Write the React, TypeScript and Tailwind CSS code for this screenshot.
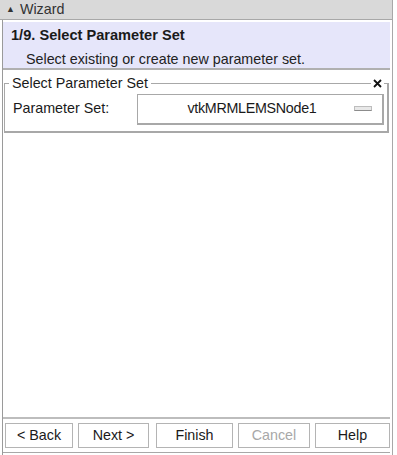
export default function App() {
  const btn = "h-[25px] border border-[#b4b4b4] bg-white flex items-center justify-center text-[14.3px]";
  return (
    <div className="w-[397px] h-[455px] bg-white flex font-['Liberation_Sans',Arial,sans-serif] text-[#1a1a1a]">
      <div className="w-[393px] h-full flex flex-col border-r border-[#a8a8a8]">
        {/* title bar */}
        <div className="h-[20px] bg-[#d9d9d9] border-b border-[#a8a8a8] flex items-center pl-[6px] gap-[5px] text-[14.3px] text-[#333]">
          <span className="text-[9px] leading-none">▲</span>
          <span>Wizard</span>
        </div>
        <div className="flex-1 flex flex-col border-l border-[#9a9a9a] ml-[2px] pt-[2px] pr-[2px]">
          {/* header */}
          <div className="h-[48px] bg-[#e6e6fa] border-b-2 border-[#b0b0b0] flex flex-col pl-[8px]">
            <div className="text-[14.6px] font-bold mt-[4px] leading-[18px]">1/9. Select Parameter Set</div>
            <div className="text-[14.3px] text-[#222] pl-[15px] mt-[6px] leading-[18px]">Select existing or create new parameter set.</div>
          </div>
          {/* group */}
          <div className="relative mt-[13px] mx-[1px] h-[50px] border border-[#a8a8a8] border-r-2 border-b-2">
            <span className="absolute -top-[10px] left-[4px] bg-white px-[3px] text-[14.3px] leading-[18px]">Select Parameter Set</span>
            <span className="absolute -top-[6px] right-[3px] bg-white px-[2px] py-[1px] flex">
              <svg width="9" height="9" viewBox="0 0 9 9">
                <path d="M1 1 L8 8 M8 1 L1 8" stroke="#111" strokeWidth="1.8" />
              </svg>
            </span>
            <div className="flex items-center h-full pl-[8px] pr-[3px] pt-[5px] pb-[2px]">
              <span className="w-[124px] text-[14.3px]">Parameter Set:</span>
              <div className="flex-1 h-[31px] border border-[#a8a8a8] border-r-2 border-b-2 flex items-center">
                <span className="flex-1 text-center text-[14.3px] pl-[12px] tracking-[-0.3px]">vtkMRMLEMSNode1</span>
                <span className="w-[18px] h-[5px] mr-[10px] bg-[#e8e8e8] border border-[#bdbdbd] border-b-[#8c8c8c]" />
              </div>
            </div>
          </div>
          <div className="flex-1" />
          {/* buttons */}
          <div className="border-t-2 border-[#bdbdbd] pt-[4px] pb-[4px] border-b border-b-[#a8a8a8] flex gap-[5px] pl-[2px]">
            <div className={`${btn} w-[68px]`}>&lt; Back</div>
            <div className={`${btn} w-[71px]`}>Next &gt;</div>
            <div className={`${btn} w-[77px] ml-[2px]`}>Finish</div>
            <div className={`${btn} w-[72px] text-[#a8a8a8]`}>Cancel</div>
            <div className={`${btn} flex-1`}>Help</div>
          </div>
          <div className="h-[2px]" />
        </div>
      </div>
    </div>
  );
}
